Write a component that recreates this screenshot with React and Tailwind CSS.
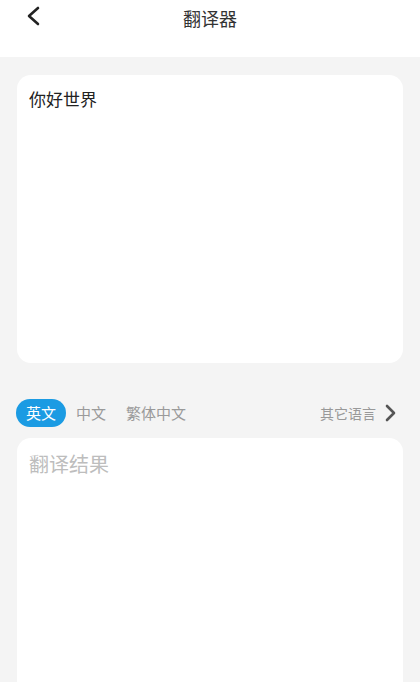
const tabs = ['英文', '中文', '繁体中文']

const ChevronLeft = () => (
  <svg width="16" height="20" viewBox="0 0 16 20" fill="none">
    <path d="M13 2 L4 10 L13 18" stroke="#222" strokeWidth="2.6" strokeLinecap="round" strokeLinejoin="round" />
  </svg>
)

const ChevronRight = () => (
  <svg width="12" height="18" viewBox="0 0 12 18" fill="none">
    <path d="M3 2 L10 9 L3 16" stroke="#555" strokeWidth="2.6" strokeLinecap="round" strokeLinejoin="round" />
  </svg>
)

const App = () => {
  return (
    <div
      className="flex h-screen flex-col overflow-hidden bg-[#f4f4f4]"
      style={{ fontFamily: '"Noto Sans CJK SC", "Noto Sans", sans-serif' }}
    >
      <header className="relative flex h-[57px] shrink-0 items-start justify-center bg-white">
        <button className="absolute left-[25px] top-[6px]">
          <ChevronLeft />
        </button>
        <h1 className="pt-[5px] text-[18px] leading-[26px] text-[#333]">翻译器</h1>
      </header>

      <div className="mx-[17px] mt-[18px] h-[288px] shrink-0 rounded-[14px] bg-white px-[12px] pt-[12px]">
        <p className="text-[17px] leading-[24px] text-[#222]">你好世界</p>
      </div>

      <div className="mt-[36px] flex h-[28px] shrink-0 items-center pl-[16px] pr-[24px]">
        {tabs.map((tab, i) => (
          <span
            key={tab}
            className={
              i === 0
                ? 'rounded-full bg-[#1b9be3] px-[10px] text-[15px] leading-[28px] text-white'
                : 'px-[10px] text-[15px] leading-[28px] text-[#9a9a9a]'
            }
          >
            {tab}
          </span>
        ))}
        <span className="ml-auto text-[14px] text-[#999]">其它语言</span>
        <span className="ml-[8px] flex items-center">
          <ChevronRight />
        </span>
      </div>

      <div className="mx-[17px] mt-[11px] flex-1 rounded-t-[14px] bg-white px-[12px] pt-[12px]">
        <p className="text-[20px] leading-[28px] text-[#bdbdbd]">翻译结果</p>
      </div>
    </div>
  )
}

export default App
